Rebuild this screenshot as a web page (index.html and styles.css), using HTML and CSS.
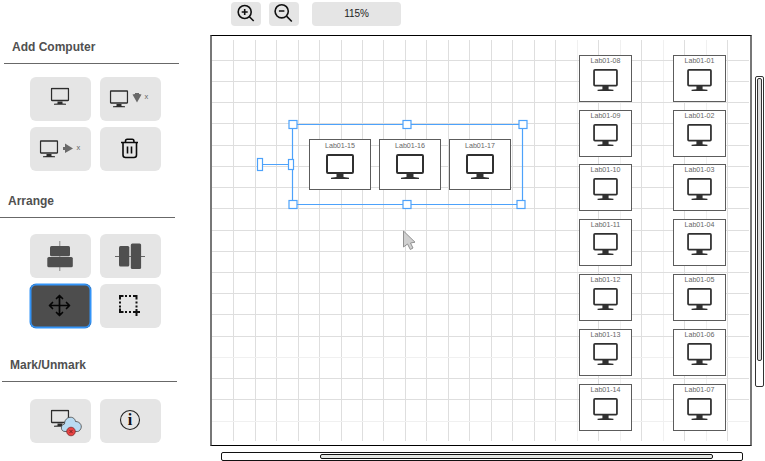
FILE: index.html
```
<!DOCTYPE html>
<html lang="en">
<head>
<meta charset="utf-8">
<title>Lab map editor</title>
<link rel="stylesheet" href="styles.css">
</head>
<body>
<svg class="defs" aria-hidden="true">
  <symbol id="monitor" viewBox="0 0 28 25">
    <rect x="1" y="1" width="26" height="18" rx="1" fill="none" stroke="currentColor" stroke-width="2"/>
    <path d="M10.500 19h7v4l5.500.7V25H5v-1.300l5.500-.7z" fill="currentColor"/>
  </symbol>
  <symbol id="pc" viewBox="0 0 19 18">
    <rect x="1" y="1" width="17" height="12" rx=".5" fill="none" stroke="#2c2c2c" stroke-width="1.300"/>
    <path d="M7 14h5v2l3.500.3v.9h-12v-.9L7 16z" fill="#2c2c2c"/>
  </symbol>
</svg>
<div class="app">
  <aside class="sidebar">
    <section class="group add">
      <h2>Add Computer</h2>
      <div class="tools">
        <button><svg width="60" height="44"><use href="#pc" x="20.500" y="10.500" width="19" height="18"/></svg></button>
        <button><svg width="60" height="44"><use href="#pc" x="9.500" y="13" width="19" height="18"/><path d="M35 16h4v1l2.500.5L37 25.500 32.500 17.500l2.500-.5z" fill="#696969"/><text x="44.500" y="22">x</text></svg></button>
        <button><svg width="60" height="44"><use href="#pc" x="9.500" y="13" width="19" height="18"/><path d="M33 20h2v-3.500l8 5-8 4.500V23h-2z" fill="#696969"/><text x="46.500" y="23">x</text></svg></button>
        <button><svg width="60" height="44" fill="none" stroke="#0a0a0a" stroke-width="1.600"><path d="M21 15.500h17M23 15.500v12.500q0 2.500 2.500 2.500h8.500q2.500 0 2.500-2.500V15.500M25.500 15v-1q0-1.700 1.700-1.700h5q1.700 0 1.700 1.700v1M27.500 19.500v7M31.500 19.500v7"/></svg></button>
      </div>
    </section>
    <section class="group arrange">
      <h2>Arrange</h2>
      <div class="tools">
        <button><svg width="60" height="44"><path d="M29.800 7v30" stroke="#888"/><g fill="#4f4f4f"><rect x="20" y="12" width="20" height="10.300" rx="1.500"/><rect x="17.300" y="23" width="25.500" height="10.300" rx="1.500"/></g></svg></button>
        <button><svg width="60" height="44"><path d="M15 22.500h30" stroke="#666"/><g fill="#4f4f4f"><rect x="19" y="12" width="10.300" height="20.500" rx="1.500"/><rect x="30.800" y="9.500" width="10.300" height="25.500" rx="1.500"/></g></svg></button>
        <button class="active"><svg width="60" height="44" fill="none" stroke="#050505" stroke-width="1.700" stroke-linecap="round" stroke-linejoin="round"><path d="M29.500 12v19M20 21.500h19M26.500 14.500l3-3 3 3M26.500 28.500l3 3 3-3M22.500 18.500l-3 3 3 3M36.500 18.500l3 3-3 3"/></svg></button>
        <button><svg width="60" height="44" fill="none" stroke="#111" stroke-width="2"><path d="M20 15.500V12h3.500M33 12h3.500v3.500M20 24.500V28h3.500M25 12h2M29 12h2M25 28h2M29 28h2M36.500 17.500v2M36.500 21.500v2M20 17.500v2M20 21.500v2M36.500 25v7M33 28h7"/></svg></button>
      </div>
    </section>
    <section class="group mark">
      <h2>Mark/Unmark</h2>
      <div class="tools">
        <button><svg width="60" height="44"><use href="#pc" x="20.500" y="10.500" width="19" height="18"/><path d="M35 32.500c-4.500 0-5-6.500-.5-7.500 0-8 10-9 11-2.500 5 0 7.500 5 4.500 8.500-1 1.500-2 1.500-4 1.500z" fill="#b9dbf2" stroke="#444" stroke-width=".8"/><circle cx="41" cy="32.500" r="4.300" fill="#e94444" stroke="#7d3030" stroke-width=".8"/><path d="M39.400 30.900l3.200 3.200M42.600 30.900l-3.200 3.200" stroke="#722"/></svg></button>
        <button><svg width="60" height="44"><circle cx="30" cy="21" r="9.500" fill="none" stroke="#222" stroke-width="1.100"/><text class="info" x="30" y="26" text-anchor="middle">i</text></svg></button>
      </div>
    </section>
  </aside>
  <main class="editor">
    <div class="toolbar">
      <button><svg width="30" height="24" fill="none" stroke="#111" stroke-width="1.600"><circle cx="13.700" cy="10" r="6.500"/><path d="M18.400 14.700l4.300 4.300M10.700 10h6M13.700 7v6"/></svg></button>
      <button><svg width="30" height="24" fill="none" stroke="#111" stroke-width="1.600"><circle cx="12.700" cy="9.300" r="6.600"/><path d="M17.500 14.100l5.300 5.400M9.900 9h5.500"/></svg></button>
      <button class="level">115%</button>
    </div>
    <div class="workspace">
      <div class="canvas" id="canvas">
        <svg class="grid" id="grid" width="538" height="409"></svg>
      </div>
      <div class="vbar"><div class="thumb"></div></div>
    </div>
    <div class="hbar"><div class="thumb"></div></div>
  </main>
</div>
<script src="app.js"></script>
</body>
</html>
```
FILE: styles.css
```
* { box-sizing: border-box; }
body { margin: 0; background: #fff; font-family: "Liberation Sans", Arial, sans-serif; overflow: hidden; }
.defs { display: none; }
.app { display: flex; width: 765px; height: 461px; }
.sidebar { width: 210px; flex: none; display: flex; flex-direction: column; }
.group { width: 175px; }
.group h2 { margin: 0; padding-left: 8px; height: 27px; font-size: 12px; line-height: 20px; font-weight: 700; color: #505050; border-bottom: 1px solid #686868; }
.add { margin: 37px 0 0 4px; }
.arrange { margin-top: 20px; }
.mark { margin: 27px 0 0 2px; }
.tools { display: grid; grid-template-columns: 61px 61px; gap: 6px 9px; margin: 13px 0 0 26px; }
.arrange .tools { margin: 16px 0 0 30px; }
.mark .tools { margin: 17px 0 0 28px; }
button { display: flex; padding: 0; border: 0; border-radius: 6px; background: #e5e5e5; font: inherit; }
.tools button { height: 44px; }
.tools text { font-size: 7.500px; fill: #666; }
.tools .info { font: bold 16px "Liberation Serif", serif; fill: #111; }
.tools .active { background: #4d4d4d; box-shadow: inset 0 0 0 1.500px #3394f8, 0 0 0 .5px #3394f8; }
.editor { flex: 1; display: flex; flex-direction: column; }
.toolbar { display: flex; height: 35px; padding: 2px 0 0 21px; gap: 8px; }
.toolbar button { width: 30px; height: 24px; border-radius: 4px; }
.toolbar .level { width: 89px; margin-left: 5px; align-items: center; justify-content: center; font-size: 10px; letter-spacing: -.1px; padding-bottom: 1px; color: #222; }
.workspace { display: flex; align-items: flex-start; gap: 4px; }
.canvas { position: relative; width: 542px; height: 411px; border: 1px solid #000; border-left: 2px solid #777; border-right: 2px solid #777; }
.grid { display: block; }
.grid line { stroke: #dedede; }
.grid .faint { stroke: #f0f0f0; }
.node { position: absolute; width: 53px; height: 47px; border: 1px solid #5c5c5c; background: #fff; color: #303030; display: flex; flex-direction: column; align-items: center; }
.node span { font-size: 7.100px; line-height: 8px; margin-top: 1px; color: #666; }
.node svg { width: 25px; height: 22px; margin-top: 4px; }
.node.picked { width: 62px; height: 51px; }
.node.picked span { margin-top: 2px; }
.node.picked svg { width: 28px; height: 25px; margin-top: 4px; }
.overlay { position: absolute; left: 0; top: 0; }
.vbar { width: 9px; height: 311px; margin: 41px 0 0 -1px; border: 1px solid #333; border-radius: 2px; padding: 1px; }
.vbar .thumb { height: 283px; width: 5px; border: 1px solid #333; border-radius: 2px; background: #ddd; }
.hbar { width: 522px; height: 9px; margin: 6px 0 0 11px; border: 1px solid #111; border-radius: 2px; padding: 1px 0 0 98px; }
.hbar .thumb { width: 393px; height: 5px; border: 1px solid #111; border-radius: 2px; background: #e5e8e5; }
```
FILE: app.js
```
const canvas = document.getElementById('canvas');
const grid = document.getElementById('grid');
// Canvas interior starts at this page offset.
const ox = 212, oy = 36;
let lines = '';
for (let i = 0; i < 24; i++) {
  const x = Math.floor(233.6 + i * 21.480) + .5 - ox;
  const faint = i > 14 && i % 2 === 0;
  lines += `<line class="${faint ? 'faint' : ''}" x1="${x}" x2="${x}" y1="4" y2="405"/>`;
}
for (let i = 0; i < 18; i++) {
  const y = Math.floor(60.300 + i * 21.220) + .5 - oy;
  lines += `<line class="${i === 14 || i === 17 ? 'faint' : ''}" x1="0" x2="537" y1="${y}" y2="${y}"/>`;
}
grid.innerHTML = lines;
function addNode(n, x, y, picked) {
  const el = document.createElement('div');
  el.className = picked ? 'node picked' : 'node';
  el.style.left = x - ox + 'px';
  el.style.top = y - oy + 'px';
  el.innerHTML = `<span>Lab01-${String(n).padStart(2, '0')}</span><svg><use href="#monitor"/></svg>`;
  canvas.append(el);
}
for (let i = 0; i < 7; i++) {
  const y = Math.round(54.700 + i * 54.850);
  addNode(i + 8, 579, y);
  addNode(i + 1, 673, y);
}
for (let i = 0; i < 3; i++) addNode(15 + i, 309 + i * 70, 139, true);
const handles = [[293, 124.500], [407, 124.500], [523, 124.500], [293, 204.500], [407, 204.500], [521, 204.500]];
canvas.insertAdjacentHTML('beforeend', `<svg class="overlay" width="538" height="409" viewBox="212 36 538 409">
  <g fill="none" stroke="#4da2fb" stroke-width="1.200">
    <path d="M292.500 124.500h230v80h-230zM260 164.500h32"/>
    <g fill="#fff">${handles.map(([x, y]) => `<rect x="${x - 4}" y="${y - 4}" width="8" height="8"/>`).join('')}
    <rect x="257.500" y="158.500" width="5" height="12"/><rect x="288.500" y="159.500" width="5" height="10"/></g>
  </g>
  <path d="M403.500 231v16l4-3 2.800 5.500 2.700-1.500-2.500-5 4.500-.8z" fill="#d0d0d0" stroke="#888" stroke-width=".9"/>
</svg>`);
```
